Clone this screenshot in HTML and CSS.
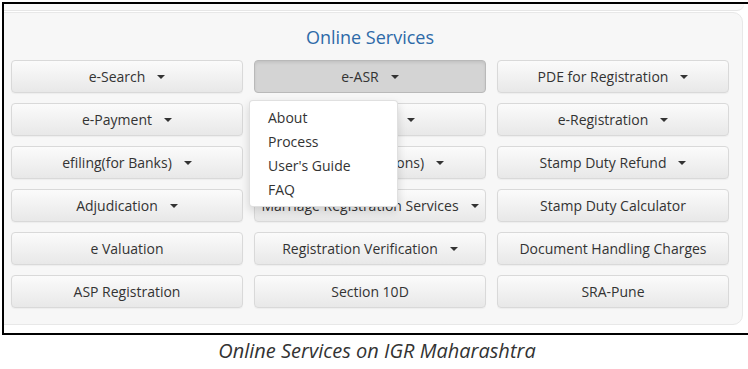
FILE: index.html
```html
<!DOCTYPE html>
<html lang="en">
<head>
    <meta charset="UTF-8">
    <meta name="viewport" content="width=device-width, initial-scale=1.0">
    <title>Online Services on IGR Maharashtra</title>
    <link rel="stylesheet" href="styles.css">
</head>
<body>
    <div class="shot">
        <div class="prev-panel"></div>
        <div class="panel">
            <h2 class="panel-title">Online Services</h2>
            <div class="services">
                <button class="svc-btn">e-Search<span class="caret"></span></button>
                <div class="svc-group">
                    <button class="svc-btn active">e-ASR<span class="caret"></span></button>
                    <ul class="dropdown">
                        <li>About</li>
                        <li>Process</li>
                        <li>User's Guide</li>
                        <li>FAQ</li>
                    </ul>
                </div>
                <button class="svc-btn">PDE for Registration<span class="caret"></span></button>

                <button class="svc-btn">e-Payment<span class="caret"></span></button>
                <button class="svc-btn">e-Filing 1.0<span class="caret"></span></button>
                <button class="svc-btn">e-Registration<span class="caret"></span></button>

                <button class="svc-btn">efiling(for Banks)<span class="caret"></span></button>
                <button class="svc-btn">e-Filing(Institutions)<span class="caret"></span></button>
                <button class="svc-btn">Stamp Duty Refund<span class="caret"></span></button>

                <button class="svc-btn">Adjudication<span class="caret"></span></button>
                <button class="svc-btn">Marriage Registration Services<span class="caret"></span></button>
                <button class="svc-btn">Stamp Duty Calculator</button>

                <button class="svc-btn">e Valuation</button>
                <button class="svc-btn">Registration Verification<span class="caret"></span></button>
                <button class="svc-btn">Document Handling Charges</button>

                <button class="svc-btn">ASP Registration</button>
                <button class="svc-btn">Section 10D</button>
                <button class="svc-btn">SRA-Pune</button>
            </div>
        </div>
    </div>
    <p class="caption">Online Services on IGR Maharashtra</p>
</body>
</html>
```

FILE: styles.css
```css
body {
    margin: 0;
    background: #fff;
    font-family: "Open Sans", "Noto Sans", sans-serif;
    color: #333;
}
.shot {
    margin: 2px 0 0 2px;
    height: 329px;
    border-top: 2px solid #000;
    border-left: 2px solid #000;
    border-bottom: 2px solid #000;
    background: #fff;
    overflow: hidden;
}
.prev-panel {
    height: 6px;
    margin: 0 4px 0 -10px;
    border-bottom: 1px solid #e6e6e6;
    border-bottom-right-radius: 10px;
    background: #fafafa;
}
.panel {
    margin: 1px 5px 0 -10px;
    padding: 12px 13px 16px 16px;
    background: #f7f7f7;
    border: 1px solid #e8e8e8;
    border-radius: 10px;
}
.panel-title {
    margin: 0 0 11px;
    font-size: 18px;
    line-height: 24px;
    font-weight: normal;
    text-align: center;
    color: #2d6aa8;
}
.services {
    display: grid;
    grid-template-columns: repeat(3, minmax(0, 1fr));
    column-gap: 11px;
    row-gap: 10px;
}
.svc-group {
    position: relative;
    display: flex;
    min-width: 0;
}
.svc-btn {
    display: flex;
    align-items: center;
    justify-content: center;
    width: 100%;
    min-width: 0;
    height: 33px;
    padding: 0 4px;
    font-family: inherit;
    font-size: 14px;
    color: #333;
    white-space: nowrap;
    background: linear-gradient(#fbfbfb, #e8e8e8);
    border: 1px solid #d9d9d9;
    border-radius: 4px;
    box-shadow: 0 1px 1px rgba(0, 0, 0, 0.04);
}
.svc-btn.active {
    background: #d4d4d4;
    border-color: #b9b9b9;
    box-shadow: inset 0 2px 3px rgba(0, 0, 0, 0.08);
}
.caret {
    display: inline-block;
    flex: none;
    margin-left: 12px;
    border-top: 4px solid #333;
    border-left: 4px solid transparent;
    border-right: 4px solid transparent;
}
.dropdown {
    position: absolute;
    top: 40px;
    left: -5px;
    z-index: 10;
    width: 147px;
    margin: 0;
    padding: 5px 0 4px;
    list-style: none;
    background: #fff;
    border: 1px solid rgba(0, 0, 0, 0.12);
    border-radius: 4px;
    box-shadow: 0 4px 10px rgba(0, 0, 0, 0.15);
}
.dropdown li {
    padding: 0 18px;
    font-size: 14px;
    line-height: 24px;
    color: #333;
}
.caption {
    margin: 3px 0 0;
    font-size: 20px;
    line-height: 26px;
    font-style: italic;
    text-align: center;
    color: #333;
    padding-left: 6px;
}
```
